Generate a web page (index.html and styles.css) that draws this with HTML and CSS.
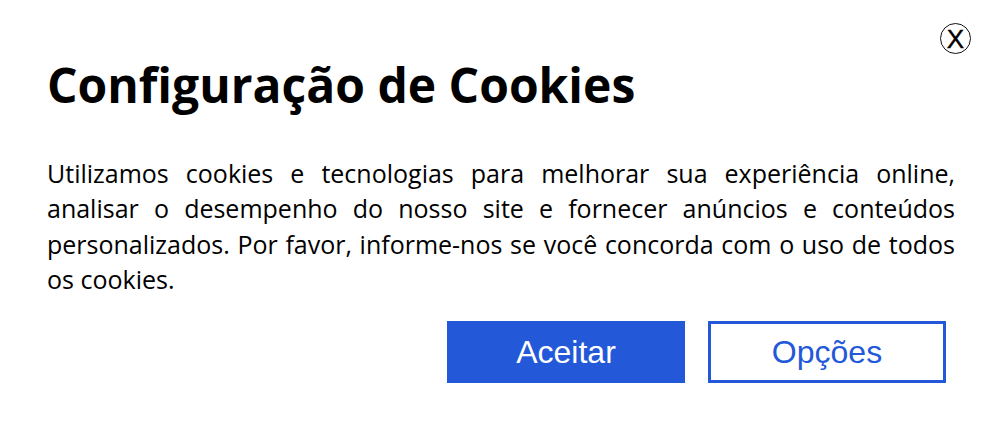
FILE: index.html
```html
<!DOCTYPE html>
<html lang="pt">
<head>
    <meta charset="UTF-8">
    <title>Configuração de Cookies</title>
    <link rel="stylesheet" href="styles.css">
</head>
<body>
    <div class="cookie-box">
        <div class="close-row">
            <span class="close-btn">X</span>
        </div>
        <h1>Configuração de Cookies</h1>
        <p class="cookie-text">Utilizamos cookies e tecnologias para melhorar sua experiência online, analisar o desempenho do nosso site e fornecer anúncios e conteúdos personalizados. Por favor, informe-nos se você concorda com o uso de todos os cookies.</p>
        <div class="actions">
            <button class="btn btn-accept">Aceitar</button>
            <button class="btn btn-options">Opções</button>
        </div>
    </div>
</body>
</html>
```

FILE: styles.css
```css
body {
    margin: 0;
    background: #fff;
    font-family: 'Open Sans', sans-serif;
    color: #000;
}

.cookie-box {
    padding: 23px 45px 0 47px;
}

.close-row {
    display: flex;
    justify-content: flex-end;
    margin-right: -16px;
}

.close-btn {
    width: 29px;
    height: 29px;
    border: 1.5px solid #111;
    border-radius: 50%;
    display: flex;
    justify-content: center;
    align-items: center;
    font-family: 'Liberation Sans', Arial, sans-serif;
    font-size: 26px;
    line-height: 1;
    -webkit-text-stroke: 0.4px #000;
}

h1 {
    font-size: 48px;
    font-weight: 700;
    margin: 3px 0 0;
    line-height: 56px;
}

.cookie-text {
    font-size: 25px;
    line-height: 35.3px;
    text-align: justify;
    margin: 43px 0 0;
}

.actions {
    display: flex;
    justify-content: flex-end;
    gap: 23px;
    margin: 24px 9px 0 0;
}

.btn {
    width: 238px;
    height: 62px;
    font-family: 'Liberation Sans', Arial, sans-serif;
    font-size: 32px;
    border: 3px solid #2358d8;
    box-sizing: border-box;
}

.btn-accept {
    background: #2358d8;
    color: #fff;
}

.btn-options {
    background: #fff;
    color: #2358d8;
}
```
